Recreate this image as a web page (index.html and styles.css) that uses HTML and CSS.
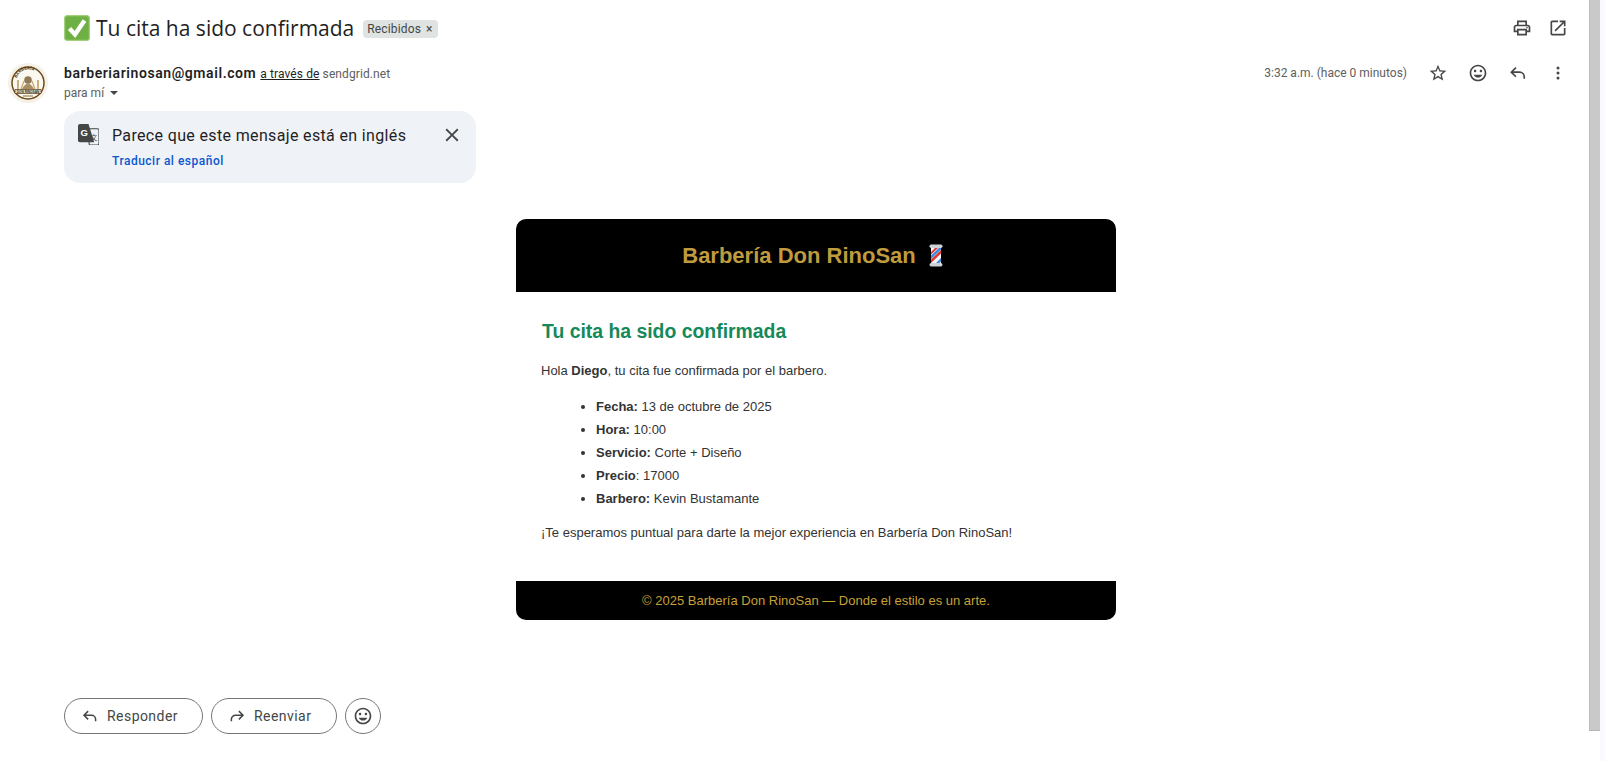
FILE: index.html
```html
<!DOCTYPE html>
<html lang="es">
<head>
<meta charset="utf-8">
<title>Tu cita ha sido confirmada</title>
<link rel="stylesheet" href="styles.css">
</head>
<body>
<main class="mail">
  <header class="subject-row">
    <div class="subject">
      <svg class="check-emoji" viewBox="0 0 26 26"><rect x="0.5" y="0.5" width="25" height="25" rx="2.5" fill="#79b94e" stroke="#a3d07f"/><rect x="2" y="2" width="22" height="22" rx="1.5" fill="#6fb044"/><path d="M5.500 13.500l5.500 6L20.500 5.500" fill="none" stroke="#fff" stroke-width="4.400"/></svg>
      <h1 class="subject-text">Tu cita ha sido confirmada</h1>
      <span class="label">Recibidos<span class="label-x">×</span></span>
    </div>
    <div class="top-icons">
      <svg class="icon" viewBox="0 0 24 24"><path d="M19 8h-1V3H6v5H5c-1.66 0-3 1.34-3 3v6h4v4h12v-4h4v-6c0-1.66-1.34-3-3-3zM8 5h8v3H8V5zm8 14H8v-4h8v4zm4-4h-2v-2H6v2H4v-4c0-.55.45-1 1-1h14c.55 0 1 .45 1 1v4z"/><circle cx="18" cy="11.500" r="1"/></svg>
      <svg class="icon" viewBox="0 0 24 24"><path d="M19 19H5V5h7V3H5c-1.11 0-2 .9-2 2v14c0 1.1.89 2 2 2h14c1.100 0 2-.9 2-2v-7h-2v7zM14 3v2h3.590l-9.830 9.830 1.410 1.410L19 6.410V10h2V3h-7z"/></svg>
    </div>
  </header>

  <section class="sender-row">
    <div class="avatar">
      <svg viewBox="0 0 40 40" class="avatar-svg">
        <defs><path id="arch" d="M8.500 18a11.500 11.500 0 0 1 23 0"/></defs>
        <circle cx="20" cy="20" r="20" fill="#f5f1e6"/>
        <circle cx="20" cy="20" r="16" fill="#fbf8ef" stroke="#6e4a1c" stroke-width="1.500"/>
        <text class="logo-arch"><textPath href="#arch" startOffset="8%">BARBERÍA</textPath></text>
        <path d="M10 26V17M30 26V17" stroke="#a9843f" stroke-width="1.200"/>
        <path d="M13 26l3-8M27 26l-3-8" stroke="#c4a76a" stroke-width="1.200"/>
        <circle cx="20" cy="17" r="3.800" fill="#8f7a55"/>
        <path d="M14 26q6-11 12 0z" fill="#a88f62"/>
        <path d="M7 26.500h26v4H7z" fill="#f4ecd9" stroke="#4a2f12" stroke-width="0.700"/>
        <text x="20" y="29.700" class="logo-name">DON RINOSAN</text>
        <rect x="15" y="32.500" width="10" height="1" fill="#8a6a34"/>
      </svg>
    </div>
    <div class="sender-info">
      <div class="sender-line">
        <strong class="sender-mail">barberiarinosan@gmail.com</strong>
        <span class="via"><u>a través de</u> <span class="via-domain">sendgrid.net</span></span>
      </div>
      <div class="to-line">para mí <span class="caret"></span></div>
    </div>
    <div class="sender-tools">
      <span class="time">3:32 a.m. (hace 0 minutos)</span>
      <svg class="icon" viewBox="0 0 24 24"><path d="M22 9.240l-7.190-.62L12 2 9.190 8.630 2 9.240l5.460 4.730L5.820 21 12 17.270 18.180 21l-1.630-7.030L22 9.240zM12 15.400l-3.760 2.270 1-4.280-3.320-2.880 4.380-.38L12 6.100l1.710 4.040 4.380.38-3.320 2.880 1 4.280L12 15.400z"/></svg>
      <svg class="icon" viewBox="0 0 24 24"><path d="M12 2C6.470 2 2 6.470 2 12s4.470 10 10 10 10-4.470 10-10S17.530 2 12 2zm0 18c-4.410 0-8-3.590-8-8s3.590-8 8-8 8 3.590 8 8-3.590 8-8 8zm3.500-9c.83 0 1.500-.67 1.500-1.500S16.330 8 15.500 8 14 8.670 14 9.500s.67 1.500 1.500 1.500zm-7 0c.83 0 1.500-.67 1.500-1.500S9.330 8 8.500 8 7 8.670 7 9.500 7.670 11 8.500 11zm3.500 6.500c2.330 0 4.310-1.460 5.110-3.500H6.890c.8 2.040 2.780 3.500 5.110 3.500z"/></svg>
      <svg class="icon" viewBox="0 0 24 24"><path class="line" d="M9.500 5.500L4 11l5.500 5.500M4 11h10a5.500 5.500 0 0 1 5.500 5.500V19"/></svg>
      <svg class="icon" viewBox="0 0 24 24"><circle cx="12" cy="6" r="1.800"/><circle cx="12" cy="12" r="1.800"/><circle cx="12" cy="18" r="1.800"/></svg>
    </div>
  </section>

  <aside class="translate">
    <svg class="translate-icon" viewBox="0 0 22 22">
      <path d="M9 5h11.500A1.500 1.500 0 0 1 22 6.500v14a1.500 1.500 0 0 1-1.500 1.500H12z" fill="#eff2f7" stroke="#444746" stroke-width="1.200"/>
      <path d="M2 0h9l6 19H2a2 2 0 0 1-2-2V2a2 2 0 0 1 2-2z" fill="#444746"/>
      <text x="2.500" y="12.500" class="g-glyph">G</text>
      <text x="13" y="17" class="x-glyph">文</text>
    </svg>
    <div class="translate-body">
      <p class="translate-text">Parece que este mensaje está en inglés</p>
      <a class="translate-link">Traducir al español</a>
    </div>
    <svg class="close-icon" viewBox="0 0 24 24"><path d="M19 6.410L17.590 5 12 10.590 6.410 5 5 6.410 10.590 12 5 17.590 6.410 19 12 13.410 17.590 19 19 17.590 13.410 12z"/></svg>
  </aside>

  <article class="card">
    <div class="card-head">
      <span>Barbería Don RinoSan</span>
      <svg class="pole" viewBox="0 0 16 23">
        <rect x="3" y="3" width="10" height="17" fill="#f4f6f8"/>
        <path d="M3 8l5-5h3l-8 7.500zM3 15.500L13 6v3.500L3 19z" fill="#e0342c"/>
        <path d="M3 11.500L13 2v3.500L3 15zM7 20l6-6v3.500L10 20z" fill="#3b8ae0"/>
        <rect x="1.500" y="0.500" width="13" height="3.500" rx="1.700" fill="#cbd2d8"/>
        <rect x="1.500" y="19" width="13" height="3.500" rx="1.700" fill="#cbd2d8"/>
      </svg>
    </div>
    <div class="card-body">
      <h2 class="card-title">Tu cita ha sido confirmada</h2>
      <p class="card-p">Hola <b>Diego</b>, tu cita fue confirmada por el barbero.</p>
      <ul class="details">
        <li><b>Fecha:</b> 13 de octubre de 2025</li>
        <li><b>Hora:</b> 10:00</li>
        <li><b>Servicio:</b> Corte + Diseño</li>
        <li><b>Precio</b>: 17000</li>
        <li><b>Barbero:</b> Kevin Bustamante</li>
      </ul>
      <p class="card-p">¡Te esperamos puntual para darte la mejor experiencia en Barbería Don RinoSan!</p>
    </div>
    <div class="card-foot">© 2025 Barbería Don RinoSan — Donde el estilo es un arte.</div>
  </article>

  <footer class="actions">
    <button class="btn btn-reply"><svg class="icon-sm" viewBox="0 0 24 24"><path class="line" d="M9.500 5.500L4 11l5.500 5.500M4 11h10a5.500 5.500 0 0 1 5.500 5.500V19"/></svg>Responder</button>
    <button class="btn btn-forward"><svg class="icon-sm" viewBox="0 0 24 24"><path class="line" d="M14.500 5.500L20 11l-5.500 5.500M20 11H10a5.500 5.500 0 0 0-5.500 5.500V19"/></svg>Reenviar</button>
    <button class="btn-round"><svg class="icon" viewBox="0 0 24 24"><path d="M12 2C6.470 2 2 6.470 2 12s4.470 10 10 10 10-4.470 10-10S17.530 2 12 2zm0 18c-4.410 0-8-3.590-8-8s3.590-8 8-8 8 3.590 8 8-3.590 8-8 8zm3.500-9c.83 0 1.500-.67 1.500-1.500S16.330 8 15.500 8 14 8.670 14 9.500s.67 1.500 1.500 1.500zm-7 0c.83 0 1.500-.67 1.500-1.500S9.330 8 8.500 8 7 8.670 7 9.500 7.670 11 8.500 11zm3.500 6.500c2.330 0 4.310-1.460 5.110-3.500H6.890c.8 2.040 2.780 3.500 5.110 3.500z"/></svg></button>
  </footer>
</main>
<div class="scroll-track"><div class="scroll-thumb"></div></div>
<div class="edge"></div>
</body>
</html>
```
FILE: styles.css
```css
* { box-sizing: border-box; }
html, body { height: 100%; }
body {
  margin: 0;
  display: flex;
  height: 761px;
  overflow: hidden;
  background: #fff;
  font-family: Roboto, "Liberation Sans", sans-serif;
  color: #1f1f1f;
}
.mail { flex: 1; min-width: 0; display: flex; flex-direction: column; }
.scroll-track { width: 11px; flex: none; }
.scroll-thumb { height: 731px; background: #c9c9c9; border-left: 1px solid #bdbdbd; border-bottom: 1px solid #b5b5b5; }
.edge { width: 5px; flex: none; background: #f8fafd; }

.subject-row { display: flex; align-items: center; justify-content: space-between; height: 56px; padding: 0 21px 0 64px; }
.subject { display: flex; align-items: center; }
.check-emoji { width: 26px; height: 26px; margin-right: 6px; }
.subject-text { margin: 0; font-family: "Open Sans", sans-serif; font-weight: 400; font-size: 21px; color: #1f1f1f; }
.label { margin: 2px 0 0 9px; background: #dfe3e1; color: #444746; border-radius: 4px; font-size: 12px; letter-spacing: .15px; padding: 2px 5px 2px 4px; height: 18px; line-height: 14px; white-space: nowrap; display: flex; }
.label-x { font-size: 12px; margin-left: 5px; }
.top-icons { display: flex; gap: 16px; }
.icon { width: 20px; height: 20px; fill: #444746; display: block; flex: none; }
.icon-sm { width: 18px; height: 18px; display: block; flex: none; }
.line { fill: none; stroke: #444746; stroke-width: 2; }

.sender-row { display: flex; align-items: flex-start; height: 55px; }
.avatar { width: 64px; flex: none; padding: 7px 0 0 8px; }
.avatar-svg { width: 40px; height: 40px; display: block; }
.logo-arch { font-family: "Liberation Sans", sans-serif; font-weight: 700; font-size: 4px; fill: #3f2a10; }
.logo-name { font-family: "Liberation Sans", sans-serif; font-weight: 700; font-size: 3.2px; fill: #2f1e0a; text-anchor: middle; }
.sender-info { flex: 1; padding-top: 7px; }
.sender-line { display: flex; gap: 4px; align-items: baseline; height: 20px; line-height: 20px; }
.sender-mail { font-size: 14px; font-weight: 600; letter-spacing: .58px; color: #1f1f1f; }
.via { font-size: 12px; letter-spacing: .1px; color: #1f1f1f; }
.via-domain { color: #5e5e5e; }
.to-line { font-size: 12px; color: #5e5e5e; line-height: 20px; display: flex; align-items: center; gap: 6px; }
.caret { width: 0; height: 0; border: 4px solid transparent; border-top: 4px solid #444746; border-bottom: 0; }
.sender-tools { display: flex; align-items: center; gap: 20px; padding: 0 21px 0 0; height: 33px; }
.time { font-size: 12px; color: #5e5e5e; margin-right: 1px; }

.translate { margin-left: 64px; width: 412px; height: 72px; background: #eff2f7; border-radius: 16px; display: flex; padding: 13px 0 0 14px; flex: none; }
.translate-icon { width: 21px; height: 21px; flex: none; margin-right: 13px; }
.g-glyph { font-family: "Liberation Sans", sans-serif; font-weight: 700; font-size: 10px; fill: #fff; }
.x-glyph { font-family: "Noto Sans CJK SC", sans-serif; font-size: 7px; fill: #444746; }
.translate-body { flex: 1; padding-top: 2px; }
.translate-text { margin: 0; font-size: 16px; letter-spacing: .35px; line-height: 20px; color: #1f1f1f; }
.translate-link { display: block; margin-top: 7px; font-size: 12px; letter-spacing: .5px; line-height: 16px; font-weight: 500; color: #0b57d0; }
.close-icon { width: 22px; height: 22px; fill: #444746; flex: none; margin: 0 13px 0 0; }

.card { width: 600px; margin: 36px 0 0 516px; flex: none; }
.card-head { height: 73px; background: #000; border-radius: 10px 10px 0 0; color: #bf9b3e; font-family: "Liberation Sans", sans-serif; font-weight: 700; font-size: 22px; display: flex; align-items: center; justify-content: center; }
.pole { width: 16px; height: 23px; margin: 0 6px 0 12px; }
.card-body { height: 289px; padding: 1px 25px 0; font-family: "Liberation Sans", sans-serif; font-size: 13px; color: #333; }
.card-title { margin: 26px 0 0 1px; font-size: 19.400px; line-height: 24px; color: #15895a; font-weight: 700; }
.card-p { margin: 19px 0 0; line-height: 18px; }
.details { margin: 15px 0 0; padding: 0 0 0 55px; }
.details li { line-height: 23px; }
.details + .card-p { margin-top: 14px; }
.card-foot { height: 39px; background: #000; border-radius: 0 0 10px 10px; color: #c8a135; font-family: "Liberation Sans", sans-serif; font-size: 13px; display: flex; align-items: center; justify-content: center; }

.actions { display: flex; gap: 8px; margin: 78px 0 0 64px; }
.btn { height: 36px; border: 1px solid #747775; border-radius: 18px; background: #fff; color: #444746; font-family: Roboto, sans-serif; font-size: 14px; letter-spacing: .45px; font-weight: 400; display: flex; align-items: center; gap: 8px; padding: 0 16px; }
.btn-reply { width: 139px; }
.btn-forward { width: 126px; }
.btn-round { width: 36px; height: 36px; padding: 0; border: 1px solid #747775; border-radius: 50%; background: #fff; display: flex; align-items: center; justify-content: center; }
```
